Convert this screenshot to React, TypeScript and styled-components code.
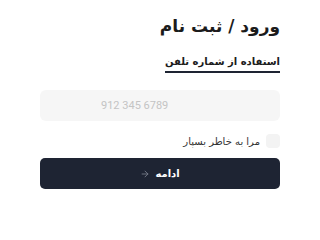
import React, { useState } from 'react';
import styled, { createGlobalStyle } from 'styled-components';
import { ArrowRight } from 'lucide-react';

const GlobalStyle = createGlobalStyle`
  * { box-sizing: border-box; }
  body {
    margin: 0;
    background: #ffffff;
    font-family: "DejaVu Sans", "Noto Sans", sans-serif;
  }
`;

const StyledPage = styled.div`
  direction: rtl;
  width: 240px;
  margin: 0 auto;
  padding-top: 14px;
  display: flex;
  flex-direction: column;
`;

const StyledTitle = styled.h1`
  margin: 0;
  font-size: 17px;
  font-weight: 700;
  color: #1b1b1b;
  line-height: 24px;
`;

const StyledTabs = styled.div`
  display: flex;
  margin-top: 18px;
`;

const StyledTab = styled.button<{ $active?: boolean }>`
  background: transparent;
  border: none;
  padding: 0 0 4px 0;
  font-family: inherit;
  font-size: 10px;
  font-weight: 700;
  color: #1b1b1b;
  border-bottom: 2px solid ${({ $active }) => ($active ? '#1e2433' : 'transparent')};
  cursor: pointer;
`;

const StyledInput = styled.input`
  margin-top: 17px;
  height: 31px;
  width: 100%;
  border: none;
  border-radius: 6px;
  background: #f6f6f6;
  direction: ltr;
  padding: 0 0 0 61px;
  font-family: Roboto, "Liberation Sans", sans-serif;
  font-size: 11px;
  color: #333;
  outline: none;

  &::placeholder {
    color: #c4c4c4;
  }
`;

const StyledRemember = styled.label`
  display: flex;
  align-items: center;
  gap: 6px;
  margin-top: 13px;
  font-size: 10px;
  color: #333;
  cursor: pointer;
`;

const StyledCheck = styled.span<{ $checked: boolean }>`
  width: 14px;
  height: 14px;
  border-radius: 4px;
  background: ${({ $checked }) => ($checked ? '#1e2433' : '#f3f3f3')};
`;

const StyledSubmit = styled.button`
  margin-top: 10px;
  height: 31px;
  width: 100%;
  border: none;
  border-radius: 5px;
  background: #1e2433;
  color: #ffffff;
  display: flex;
  align-items: center;
  justify-content: center;
  gap: 5px;
  font-family: inherit;
  font-size: 10px;
  font-weight: 700;
  cursor: pointer;

  svg {
    color: #7d8290;
  }
`;

function App() {
  const [remember, setRemember] = useState(false);

  return (
    <>
      <GlobalStyle />
      <StyledPage>
        <StyledTitle>ورود / ثبت نام</StyledTitle>
        <StyledTabs>
          <StyledTab type='button' $active>استفاده از شماره تلفن</StyledTab>
        </StyledTabs>
        <StyledInput type='tel' placeholder='912 345 6789' />
        <StyledRemember onClick={() => setRemember(!remember)}>
          <StyledCheck $checked={remember} />
          مرا به خاطر بسپار
        </StyledRemember>
        <StyledSubmit type='button'>
          ادامه
          <ArrowRight size={10} strokeWidth={2} />
        </StyledSubmit>
      </StyledPage>
    </>
  );
}

export default App;
